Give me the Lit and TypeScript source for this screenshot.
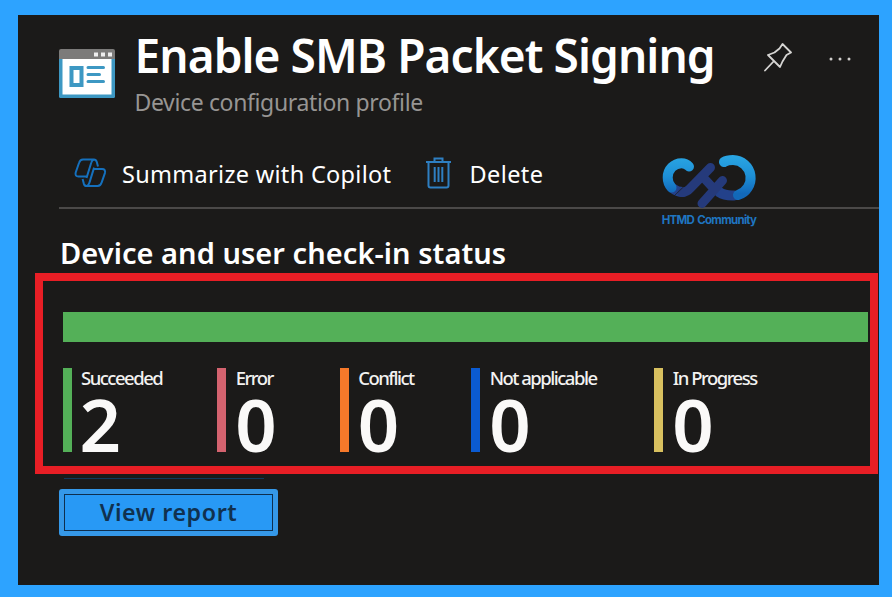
import { LitElement, html, css } from "lit";
import { customElement } from "lit/decorators.js";

interface Stat { id: string; label: string; value: number; }

const STATS: Stat[] = [
  { id: "succeeded", label: "Succeeded", value: 2 },
  { id: "error", label: "Error", value: 0 },
  { id: "conflict", label: "Conflict", value: 0 },
  { id: "not-applicable", label: "Not applicable", value: 0 },
  { id: "in-progress", label: "In Progress", value: 0 },
];

@customElement("status-stats")
export class StatusStats extends LitElement {
  static styles = css`
    :host { display: block; }
    .track { height: 30px; width: 805.5px; background: #54b058; }
    .stats { display: grid; grid-template-columns: 154.7px 122.5px 131.5px 183px 1fr; margin-top: 26px; }
    .stat { height: 84px; border-left: 9.5px solid; padding-left: 9px; box-sizing: border-box; color: #f3f2f1; }
    .succeeded { border-color: #54b058; }
    .error { border-color: #d4636f; }
    .conflict { border-color: #f6792a; }
    .not-applicable { border-color: #0b5bd2; }
    .in-progress { border-color: #d8c05f; }
    .label { font-size: 18.5px; line-height: 19px; height: 19px; letter-spacing: -1.5px; white-space: nowrap; font-weight: 500; margin-left: 0.5px; }
    .value { font-size: 72.5px; line-height: 73px; font-weight: 650; color: #faf9f8; margin-left: 0; }
    .succeeded .value { margin-left: -1px; }
  `;
  render() {
    return html`
      <div class="track"></div>
      <div class="stats">
        ${STATS.map((s) => html`<div class="stat ${s.id}">
          <div class="label">${s.label}</div>
          <div class="value">${s.value}</div>
        </div>`)}
      </div>`;
  }
}

@customElement("app-root")
export class AppRoot extends LitElement {
  static styles = css`
    :host { display: block; box-sizing: border-box; width: 892px; height: 597px; padding: 15px 13px 12px 18px; background: #2da3ff; font-family: "Noto Sans", "Open Sans", sans-serif; color: #fff; overflow: hidden; }
    .panel { position: relative; height: 570px; background: #1b1a19; display: flex; flex-direction: column; }
    svg { display: block; flex: none; }
    .header { display: flex; height: 124px; padding-left: 40.5px; box-sizing: border-box; }
    .profile { margin-top: 34px; }
    .titles { margin-left: 20px; width: 620px; white-space: nowrap; }
    h1 { margin: 8px 0 0; font-size: 46px; line-height: 64px; font-weight: 600; letter-spacing: -0.93px; }
    .subtitle { font-size: 23px; line-height: 30px; color: #979593; letter-spacing: -0.36px; }
    .pin { margin: 25px 0 0 5px; }
    .more { margin: 40.5px 0 0 36px; }
    .toolbar { display: flex; align-items: center; height: 68px; box-sizing: content-box; margin-left: 40.5px; padding-left: 14.5px; border-bottom: 2px solid #4b4948; font-size: 23.5px; white-space: nowrap; }
    .toolbar span { line-height: 32px; padding-top: 2px; }
    .summarize { width: 304px; margin-left: 15px; letter-spacing: 0.3px; }
    .delete { margin-left: 18.5px; letter-spacing: 0.4px; }
    h2 { margin: 23.5px 0 0 42px; font-size: 29px; line-height: 40px; height: 40px; font-weight: 600; letter-spacing: 0.05px; white-space: nowrap; }
    .highlight { box-sizing: border-box; width: 843px; height: 201px; margin: 0.5px 0 0 16.5px; border: 8px solid #e81e25; padding: 30.5px 0 0 20px; }
    .rule { width: 200px; height: 1px; margin: 3.5px 0 0 46px; background: #12395c; }
    button { box-sizing: border-box; width: 219px; height: 47px; margin: 10.5px 0 0 41px; padding: 5px; border: 0; border-radius: 3px; background: #3598e8; font: inherit; }
    .face { display: flex; align-items: center; justify-content: center; height: 100%; box-sizing: border-box; border: 1.5px solid #0e2f4f; background: #2899f5; color: #10314f; font-size: 23.2px; font-weight: 560; letter-spacing: 0.6px; padding-bottom: 2px; }
    .brand { position: absolute; left: 642px; top: 137px; width: 98px; display: flex; flex-direction: column; align-items: center; }
    .name { font: 700 11.5px/17px "Inter", sans-serif; color: #1f75c0; white-space: nowrap; letter-spacing: -0.7px; word-spacing: 1px; }
  `;
  render() {
    return html`<main class="panel">
      <header class="header">
        <svg class="profile" width="56" height="50" viewBox="0 0 56 50">
          <path fill="#3d98c3" d="M0 8h56v39.500q0 1.500-1.500 1.500h-53Q0 49 0 47.500z"/>
          <path fill="#7c7b7a" d="M2 0h52q2 0 2 2v8H0V2q0-2 2-2z"/>
          <path fill="#fff" d="M3.500 10h49v35.500h-49z"/>
          <path fill="#eee" d="M35 3.500h4v4h-4zM42 3.500h4v4h-4zM49 3.500h4v4h-4z"/>
          <path fill="none" stroke="#3d98c3" stroke-width="4" d="M12.500 19h10v17h-10z"/>
          <path stroke="#3d98c3" stroke-width="3" stroke-linecap="round" d="M29 18.500h15.500M29 25.500h11.500M29 32.500h15.500"/>
        </svg>
        <div class="titles"><h1>Enable SMB Packet Signing</h1><div class="subtitle">Device configuration profile</div></div>
        <svg class="pin" width="32" height="34" viewBox="760 40 32 34"><path fill="none" stroke="#d6d5d3" stroke-width="1.800" stroke-linejoin="round" stroke-linecap="round" d="M765 70.500l8.500-9M782.500 44l8.500 8.500-4.500 2.500-4 6.500-2.500 5.500L768 55l6.500-2.500 5-4z"/></svg>
        <svg class="more" width="24" height="6" viewBox="0 0 24 6" fill="#d0cecc"><circle cx="3" cy="3" r="1.500"/><circle cx="12" cy="3" r="1.500"/><circle cx="21" cy="3" r="1.500"/></svg>
      </header>
      <div class="toolbar">
        <svg width="34" height="30" viewBox="73.500 158 34 30" fill="none" stroke="#1570bd" stroke-width="2" stroke-linejoin="round">
          <path d="M94.500 159.500H83.500q-3 0-4 3.500l-3.300 9.500q-1 4 2.800 4h8M94.500 159.500q-2 .5-2.700 3l-4.800 15.500M94.500 159.500q2 0 2.800 2.500l1.200 4.500"/>
          <path transform="rotate(180 90.800 172.800)" d="M94.500 159.500H83.500q-3 0-4 3.500l-3.300 9.500q-1 4 2.800 4h8M94.500 159.500q-2 .5-2.700 3l-4.800 15.500M94.500 159.500q2 0 2.800 2.500l1.200 4.500"/>
        </svg>
        <span class="summarize">Summarize with Copilot</span>
        <svg width="25" height="32" viewBox="0 0 25 32" fill="none" stroke="#2e7fc2" stroke-width="2"><path d="M0 5h25M8.500 5V1.500h8V5M2.500 5v23.500q0 2 2 2h16q2 0 2-2V5M8.700 10v15M12.500 10v15M16.300 10v15"/></svg>
        <span class="delete">Delete</span>
      </div>
      <h2>Device and user check-in status</h2>
      <section class="highlight"><status-stats></status-stats></section>
      <div class="rule"></div>
      <button><span class="face">View report</span></button>
      <div class="brand">
        <svg width="98" height="60" viewBox="660 152 98 60" fill="none" stroke-width="10" stroke-linecap="round" stroke-linejoin="round">
          <defs><linearGradient id="g" gradientUnits="userSpaceOnUse" x1="0" y1="157" x2="0" y2="200"><stop offset="0" stop-color="#29a4e2"/><stop offset=".45" stop-color="#1d8fd6"/><stop offset=".85" stop-color="#1268b9"/></linearGradient></defs>
          <path stroke="#23418a" d="M673 188.500Q677 192 683 192M719 192Q725 196 734 195.500"/>
          <path stroke="url(#g)" d="M689 166.500Q686 163.200 681.500 163.200C674 163.200 667.700 169.500 667.700 177.500Q667.700 183.500 671.500 187.500"/>
          <path stroke="url(#g)" d="M724 162Q727 160 733 160A17.900 17.900 0 0 1 738 195"/>
          <path stroke="#253a7b" stroke-width="9" d="M682 192.500Q687 192 690 188.500L710.500 167.500M702 203.500L722.500 180.500M702 176L714 189"/>
          <path stroke="#1b1a19" stroke-width=".7" d="M673.500 196.500l13-12.500"/>
        </svg>
        <div class="name">HTMD Community</div>
      </div>
    </main>`;
  }
}
